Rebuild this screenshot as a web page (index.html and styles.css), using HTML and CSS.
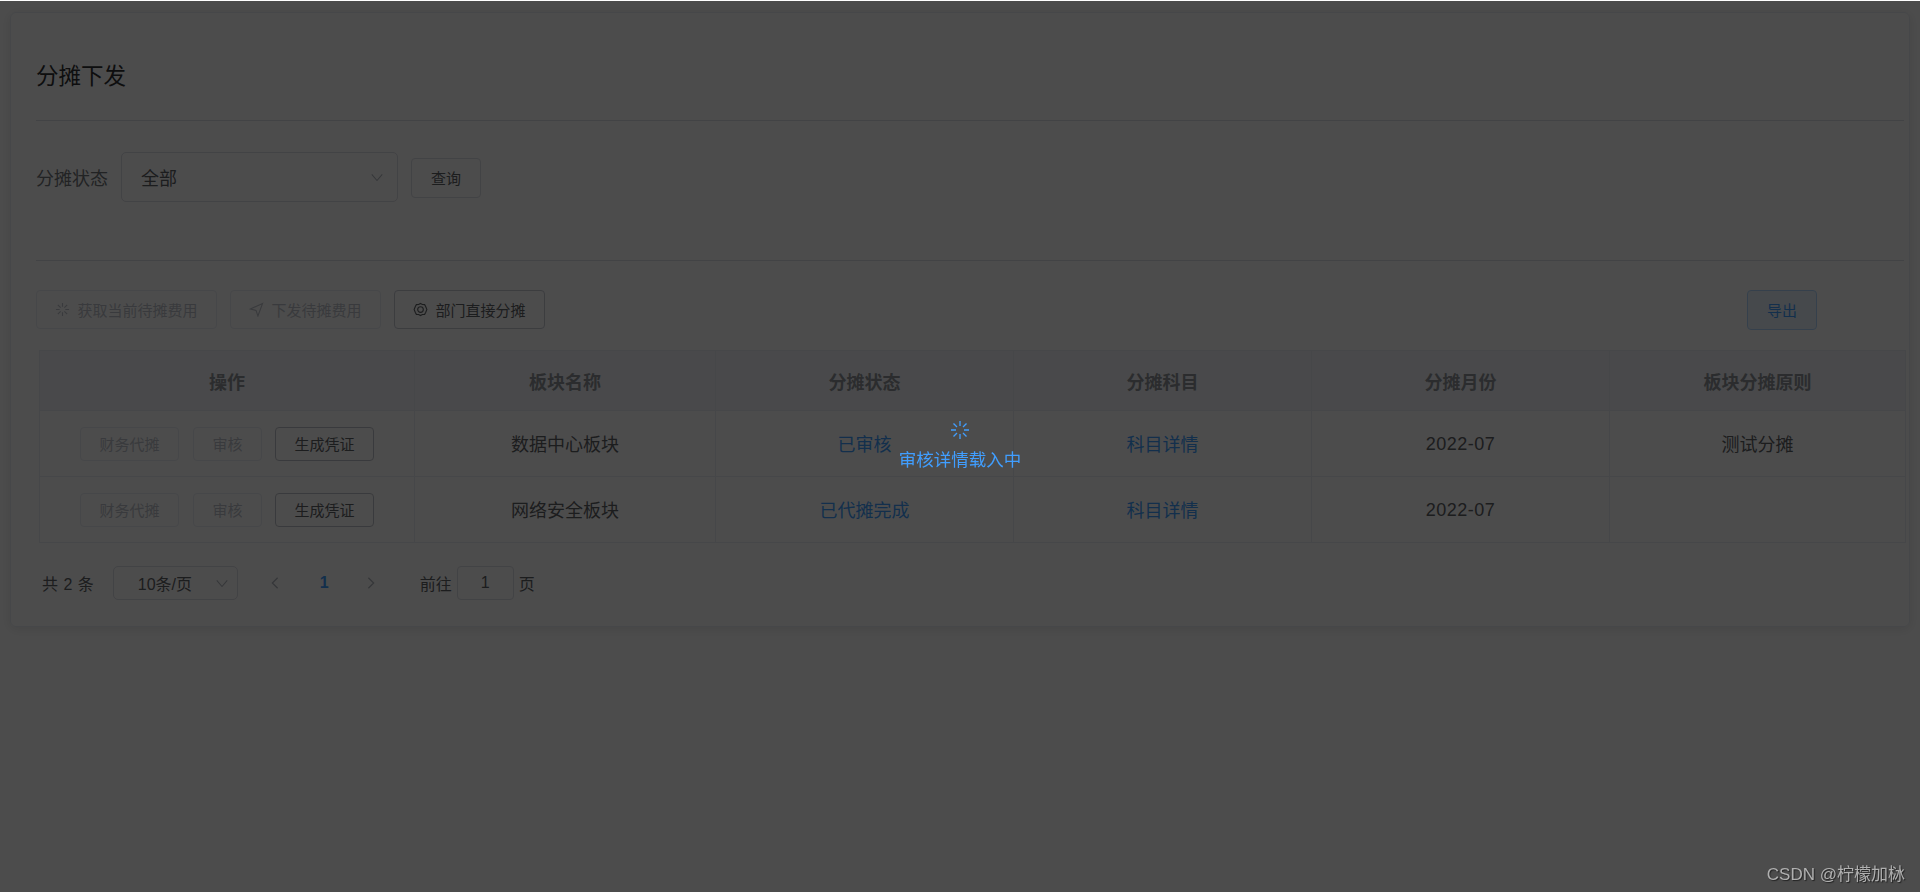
FILE: index.html
```html
<!DOCTYPE html>
<html lang="zh-CN">
  <head>
    <meta charset="UTF-8" />
    <title>分摊下发</title>
    <link rel="stylesheet" href="styles.css">
  </head>
  <body>
    <div class="card">
      <h1 class="title">分摊下发</h1>

      <div class="filter">
        <span class="filter-label">分摊状态</span>
        <div class="select select-large">
          <span>全部</span>
          <svg class="chevron" viewBox="0 0 16 16"><path d="M2 5l6 7 6-7" /></svg>
        </div>
        <button class="btn btn-query">查询</button>
      </div>

      <div class="toolbar">
        <button class="btn btn-tool is-disabled tool-fetch">
          <svg class="icon" viewBox="0 0 16 16"><path d="M8 1v4M8 11v4M1 8h4M11 8h4M3 3l3 3M10 10l3 3M13 3l-3 3M6 10l-3 3" /></svg>
          获取当前待摊费用
        </button>
        <button class="btn btn-tool is-disabled tool-send">
          <svg class="icon" viewBox="0 0 16 16"><path d="M14.5 1.5L1.5 7.5l6 1.5 2 6z" /></svg>
          下发待摊费用
        </button>
        <button class="btn btn-tool tool-direct">
          <svg class="icon" viewBox="0 0 16 16"><path d="M8 1.5l2 1.2 2.400.1 1.100 2.100L14.800 8l-1.300 3.100-1.100 2.100-2.400.100L8 14.500l-2-1.200-2.400-.100-1.100-2.100L1.200 8l1.300-3.100 1.100-2.100 2.400-.100z" /><circle cx="8" cy="8" r="3" /></svg>
          部门直接分摊
        </button>
        <button class="btn btn-export">导出</button>
      </div>

      <table class="data-table">
        <colgroup>
          <col class="col-action" />
          <col class="col-name" />
          <col class="col-data" />
          <col class="col-data" />
          <col class="col-data" />
          <col />
        </colgroup>
        <thead>
          <tr>
            <th>操作</th>
            <th>板块名称</th>
            <th>分摊状态</th>
            <th>分摊科目</th>
            <th>分摊月份</th>
            <th>板块分摊原则</th>
          </tr>
        </thead>
        <tbody>
          <tr>
            <td class="cell-actions">
              <div class="row-actions">
                <button class="btn btn-row is-disabled">财务代摊</button>
                <button class="btn btn-row is-disabled">审核</button>
                <button class="btn btn-row">生成凭证</button>
              </div>
            </td>
            <td>数据中心板块</td>
            <td><a class="link">已审核</a></td>
            <td><a class="link">科目详情</a></td>
            <td class="cell-date">2022-07</td>
            <td>测试分摊</td>
          </tr>
          <tr>
            <td class="cell-actions">
              <div class="row-actions">
                <button class="btn btn-row is-disabled">财务代摊</button>
                <button class="btn btn-row is-disabled">审核</button>
                <button class="btn btn-row">生成凭证</button>
              </div>
            </td>
            <td>网络安全板块</td>
            <td><a class="link">已代摊完成</a></td>
            <td><a class="link">科目详情</a></td>
            <td class="cell-date">2022-07</td>
            <td></td>
          </tr>
        </tbody>
      </table>

      <div class="pager">
        <span class="pager-total">共 2 条</span>
        <div class="select select-small">
          <span>10条/页</span>
          <svg class="chevron" viewBox="0 0 16 16"><path d="M2 5l6 7 6-7" /></svg>
        </div>
        <svg class="pager-arrow" viewBox="0 0 10 16"><path d="M8 2L2 8l6 6" /></svg>
        <span class="pager-num">1</span>
        <svg class="pager-arrow" viewBox="0 0 10 16"><path d="M2 2l6 6-6 6" /></svg>
        <span class="pager-goto">前往</span>
        <span class="pager-input">1</span>
        <span>页</span>
      </div>
    </div>

    <div class="loading-mask">
      <svg class="spinner" viewBox="0 0 20 20">
        <path d="M10 1v5M10 14v5M1 10h5M14 10h5M3.500 3.500l3.500 3.500M13 13l3.500 3.500M16.500 3.500L13 7M7 13l-3.500 3.500" />
      </svg>
      <p class="loading-text">审核详情载入中</p>
    </div>

    <div class="watermark">CSDN @柠檬加栤</div>
  </body>
</html>
```

FILE: styles.css
```css
* {
  box-sizing: border-box;
}

html,
body {
  height: 100%;
}

body {
  margin: 0;
  padding: 12px 10px 0;
  overflow: hidden;
  background-color: #fff;
  color: #606266;
  font-family: "Liberation Sans", "Noto Sans CJK SC", sans-serif;
  font-size: 18px;
}

.card {
  height: 615px;
  padding: 0 5px 0 25px;
  border: 1px solid #ebeef5;
  border-radius: 6px;
  box-shadow: 0 2px 12px rgba(0, 0, 0, 0.1);
}

.title {
  height: 108px;
  margin: 0;
  padding-top: 47px;
  border-bottom: 1px solid #dcdfe6;
  color: #303133;
  font-size: 22.500px;
  font-weight: 400;
  line-height: 34px;
}

.filter {
  display: flex;
  align-items: center;
  height: 140px;
  padding-bottom: 28px;
  border-bottom: 1px solid #dcdfe6;
}

.filter-label {
  width: 85px;
  color: #73767a;
}

.select {
  display: flex;
  align-items: center;
  justify-content: space-between;
  border: 1px solid #dcdfe6;
  border-radius: 5px;
  color: #606266;
}

.select-large {
  width: 277px;
  height: 50px;
  padding: 0 13px 0 19px;
}

.select-small {
  width: 125px;
  height: 34px;
  margin-left: 19px;
  padding: 0 8px 0 24px;
  font-size: 16px;
}

.chevron {
  width: 14px;
  height: 14px;
  fill: none;
  stroke: #b4b8c0;
  stroke-width: 1.200;
}

.btn {
  display: inline-flex;
  align-items: center;
  justify-content: center;
  padding: 0;
  border: 1px solid #dcdfe6;
  border-radius: 4px;
  background-color: #fff;
  color: #606266;
  font-family: inherit;
  font-size: 15px;
}

.btn.is-disabled {
  border-color: #ebeef5;
  color: #c0c4cc;
}

.btn-query {
  width: 70px;
  height: 40px;
  margin-top: 2px;
  margin-left: 13px;
}

.toolbar {
  display: flex;
  align-items: center;
  gap: 13px;
  height: 89px;
  padding-top: 27px;
  padding-bottom: 19px;
}

.btn-tool {
  gap: 7px;
  height: 39px;
}

.tool-fetch {
  width: 181px;
}

.tool-send {
  width: 151px;
}

.tool-direct {
  width: 151px;
  border-color: #c8ccd4;
}

.icon {
  width: 15px;
  height: 15px;
  fill: none;
  stroke: currentColor;
  stroke-width: 1.200;
}

.btn-export {
  width: 70px;
  height: 40px;
  margin-left: auto;
  margin-right: 87px;
  border-color: #b3d8ff;
  background-color: #ecf5ff;
  color: #409eff;
}

.data-table {
  width: 1867px;
  margin-left: 3px;
  border-collapse: collapse;
  table-layout: fixed;
  text-align: center;
}

.col-action {
  width: 375px;
}

.col-name {
  width: 301px;
}

.col-data {
  width: 298px;
}

.data-table th,
.data-table td {
  padding: 0;
  border: 1px solid #ebeef5;
  color: #606266;
}

.data-table th {
  height: 60px;
  background-color: #f3f6fa;
  color: #909399;
  font-size: 18px;
}

.data-table td {
  height: 66px;
  padding-bottom: 2px;
}

.data-table td.cell-actions {
  padding-bottom: 0;
}

.data-table td.cell-date {
  padding-top: 1px;
  padding-bottom: 0;
  letter-spacing: 0.500px;
}

.row-actions {
  display: flex;
  justify-content: center;
  gap: 14px;
}

.btn-row {
  height: 34px;
  padding: 0 18.500px;
}

.btn-row:not(.is-disabled) {
  margin-left: -1px;
  border-color: #c0c4cc;
}

.link {
  color: #409eff;
}

.pager {
  display: flex;
  align-items: center;
  height: 34px;
  margin-top: 23px;
  margin-left: 6px;
  color: #606266;
  font-size: 16px;
}

.pager-total {
  word-spacing: 1px;
}

.pager-arrow {
  width: 10px;
  height: 14px;
  margin-left: 32px;
  fill: none;
  stroke: #b4b8c0;
  stroke-width: 1.500;
}

.pager-arrow + .pager-num {
  margin-left: 40px;
  color: #409eff;
  font-weight: 700;
}

.pager-num + .pager-arrow {
  margin-left: 37px;
}

.pager-goto {
  margin-left: 44px;
}

.pager-input {
  width: 57px;
  height: 34px;
  margin: 0 5px;
  border: 1px solid #dcdfe6;
  border-radius: 4px;
  line-height: 32px;
  text-align: center;
}

.loading-mask {
  position: fixed;
  top: 1px;
  right: 0;
  bottom: 0;
  left: 0;
  background-color: rgba(0, 0, 0, 0.7);
  text-align: center;
}

.spinner {
  position: absolute;
  top: 419px;
  left: 950px;
  width: 20px;
  height: 20px;
  fill: none;
  stroke: #409eff;
  stroke-width: 1.300;
}

.loading-text {
  position: absolute;
  top: 447px;
  left: 0;
  width: 100%;
  margin: 0;
  color: #409eff;
  font-size: 17.500px;
  line-height: 24px;
}

.watermark {
  position: fixed;
  right: 15px;
  bottom: 7px;
  color: #b0b0b0;
  font-size: 17px;
  line-height: 20px;
  text-shadow: 1px 1px 1px #222;
}
```
